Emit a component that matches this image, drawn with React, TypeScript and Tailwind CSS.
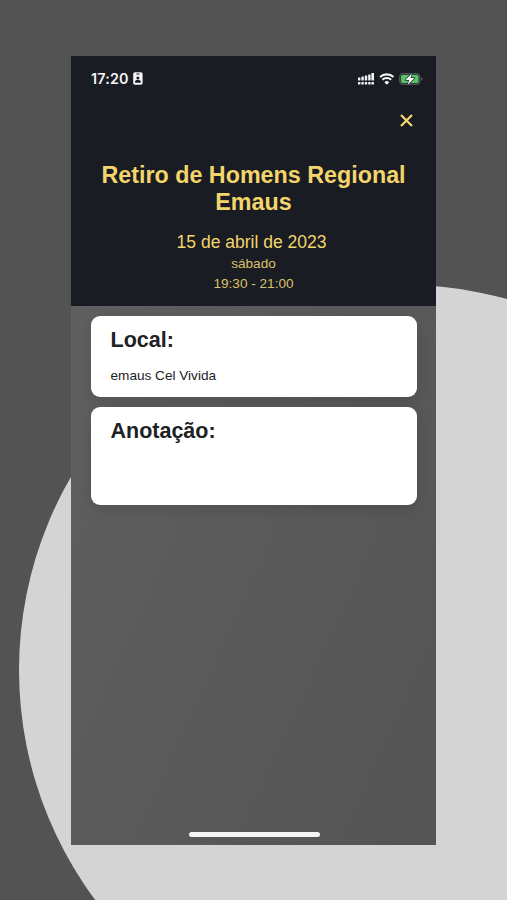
import React from "react";

function StatusBar() {
  return (
    <div className="flex h-[45px] items-center justify-between pl-[20px] pr-[13px] text-[#f5f5f6]">
      <div className="flex items-center gap-[4px]">
        <span className="pt-px font-[Inter,sans-serif] text-[14.3px] font-semibold leading-none tracking-[0.2px]">17:20</span>
        <svg width="10" height="13" viewBox="0 0 10 13">
          <rect x="0.2" y="0.2" width="9.4" height="12.6" rx="1.8" fill="currentColor" />
          <rect x="3.2" y="1.4" width="3.5" height="1" rx="0.5" fill="#191c22" />
          <circle cx="4.9" cy="6" r="1.5" fill="#191c22" />
          <path d="M2 10.8V9.7C2 8.5 3 8 4.9 8s2.9.5 2.9 1.7v1.1z" fill="#191c22" />
        </svg>
      </div>
      <svg width="65" height="14" viewBox="0 0 65 14">
        <g fill="currentColor">
          <rect x="0" y="5.4" width="2.4" height="3.2" rx="0.5" />
          <rect x="3.4" y="4.6" width="2.4" height="4" rx="0.5" />
          <rect x="6.8" y="3.6" width="2.4" height="5" rx="0.5" />
          <rect x="10.2" y="2.6" width="2.4" height="6" rx="0.5" />
          <rect x="13.4" y="1" width="2.6" height="7.6" rx="0.5" />
          <rect x="0" y="10" width="2.4" height="2.4" rx="0.5" />
          <rect x="3.4" y="10" width="2.4" height="2.4" rx="0.5" />
          <rect x="6.8" y="10" width="2.4" height="2.4" rx="0.5" />
          <rect x="10.2" y="10" width="2.4" height="2.4" rx="0.5" />
          <rect x="13.4" y="10" width="2.6" height="2.4" rx="0.5" />
        </g>
        <g fill="none" stroke="currentColor" strokeWidth="2.1">
          <path d="M22.1 5.1a9.6 9.6 0 0 1 13.4 0" />
          <path d="M24.5 7.8a6.1 6.1 0 0 1 8.6 0" />
        </g>
        <path d="M26.4 10.2a3.5 3.5 0 0 1 4.8 0l-2.4 2.500z" fill="currentColor" />
        <rect x="41.6" y="1.600" width="20.300" height="10.800" rx="3" fill="#30383b" stroke="#5b6065" strokeWidth="0.900" />
        <rect x="43" y="3" width="17.500" height="8" rx="1.700" fill="#58c565" />
        <path d="M63.2 5.200c1.100.5 1.400 1 1.400 1.800s-.3 1.300-1.400 1.800z" fill="#5b6065" />
        <path d="M54 1.200 47.400 8h3.700l-1.500 5 6.900-7h-4z" fill="currentColor" stroke="#20302a" strokeWidth="1.500" paintOrder="stroke" strokeLinejoin="round" />
      </svg>
    </div>
  );
}

export default function App() {
  return (
    <main className="relative h-[900px] w-[507px] overflow-hidden bg-[#535353] pl-[71px] pt-[56px] font-['Liberation_Sans',Arial,sans-serif]">
      <div className="absolute left-[18.5px] top-[285px] size-[770px] rounded-full bg-[#d4d4d4]" />
      <section className="relative flex h-[789px] w-[365px] flex-col bg-linear-to-br from-[#5f5f5f] from-20% via-[#5a5a5a] via-55% to-[#545454]">
        <header className="h-[249.5px] shrink-0 bg-[#191c22] text-center text-[#f3d56b]">
          <StatusBar />
          <div className="flex h-[38px] items-center justify-end pr-[23.5px]">
            <button aria-label="Fechar" className="block">
              <svg width="13" height="13" viewBox="0 0 13 13" fill="none" stroke="currentColor" strokeWidth="2.3">
                <path d="m1 1 11 11M12 1 1 12" />
              </svg>
            </button>
          </div>
          <h1 className="mt-[23px] text-[23.3px] font-bold leading-[27px]">
            Retiro de Homens Regional
            <br />
            Emaus
          </h1>
          <p className="mt-[15px] pr-[4px] text-[17.5px] leading-[22px]">15 de abril de 2023</p>
          <p className="mt-[1px] text-[13.6px] leading-[20px] text-[#d9c169]">sábado</p>
          <p className="text-[13.6px] leading-[20px] text-[#d9c169]">19:30 - 21:00</p>
        </header>
        <div className="flex flex-col gap-[10px] pl-[20px] pr-[19px] pt-[10px] text-[#202123]">
          <article className="h-[81.5px] rounded-[9px] bg-white px-[19.5px] pt-[11px] shadow-[0_4px_14px_rgba(0,0,0,0.12)]">
            <h2 className="text-[21.5px] font-bold leading-[26px]">Local:</h2>
            <p className="mt-[15px] text-[13.6px] leading-[16px]">emaus Cel Vivida</p>
          </article>
          <article className="h-[98px] rounded-[9px] bg-white px-[19.5px] pt-[11px] shadow-[0_4px_14px_rgba(0,0,0,0.12)]">
            <h2 className="text-[21.5px] font-bold leading-[26px]">Anotação:</h2>
          </article>
        </div>
        <div className="mb-[8px] ml-[118px] mt-auto h-[5px] w-[131px] rounded-full bg-[#f5f5f5]" />
      </section>
    </main>
  );
}
